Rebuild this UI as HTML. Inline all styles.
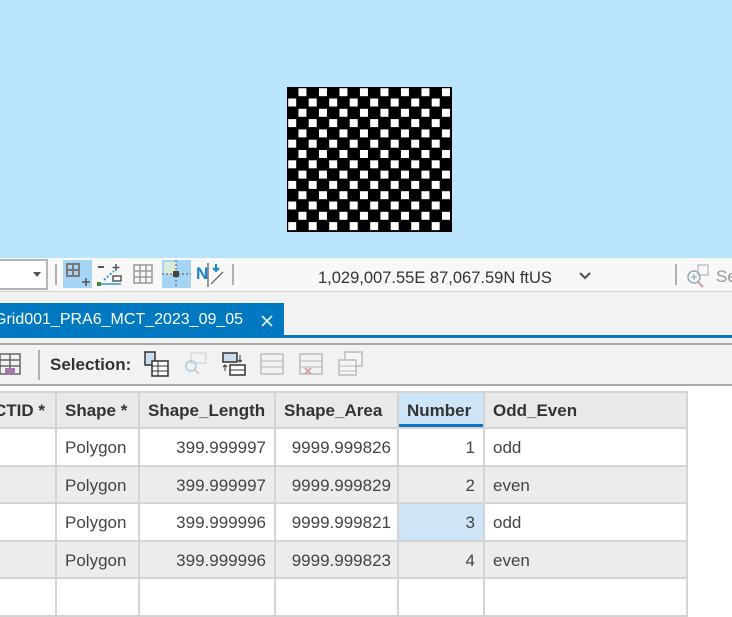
<!DOCTYPE html>
<html><head><style>
*{margin:0;padding:0;box-sizing:border-box}
body{width:732px;height:584px;overflow:hidden;background:#fff;font-family:"Liberation Sans",sans-serif;position:relative;color:#333}
.abs{position:absolute}
.map{left:0;top:0;width:732px;height:258px;background:#b9e4fc}
.status{left:0;top:258px;width:732px;height:34px;background:#f8f8f8;border-bottom:1px solid #d0d0d0}
.sep{width:2px;background:#b0b0b0}
.tabs{left:0;top:292px;width:732px;height:45px;background:#f2f2f2}
.tb{left:0;top:343px;width:732px;height:43px;background:#f2f2f2;border-top:2px solid #a8a8a8;border-bottom:2px solid #a8a8a8}
table{position:absolute;left:-3px;top:391px;border-collapse:collapse;font-size:17px;table-layout:fixed;width:689px}
td,th{border:2px solid #d4d4d4;height:37.5px;padding:3px 8px 0;white-space:nowrap;overflow:hidden}
th{background:#e9e9e9;font-weight:bold;text-align:left;height:36px;color:#333;padding-top:1px}
td{color:#444}
tr.g td{background:#ececec}
.r{text-align:right}
</style></head><body>
<div class="abs map"></div>
<svg class="abs" style="left:287px;top:87px" width="165" height="145" viewBox="0 0 165 145">
<defs>
<g id="ra" fill="#fff"><rect x="11.45" width="8" height="8"/><rect x="31.95" width="8" height="8"/><rect x="52.45" width="8" height="8"/><rect x="72.95" width="8" height="8"/><rect x="93.45" width="8" height="8"/><rect x="113.95" width="8" height="8"/><rect x="134.45" width="8" height="8"/><rect x="154.95" width="8" height="8"/></g>
<g id="rb" fill="#fff"><rect x="1.2" width="8" height="8"/><rect x="21.7" width="8" height="8"/><rect x="42.2" width="8" height="8"/><rect x="62.7" width="8" height="8"/><rect x="83.2" width="8" height="8"/><rect x="103.7" width="8" height="8"/><rect x="124.2" width="8" height="8"/><rect x="144.7" width="8" height="8"/></g>
</defs>
<rect width="165" height="145" fill="#000"/>
<use href="#ra" y="1.2"/><use href="#rb" y="11.5"/>
<use href="#ra" y="21.8"/><use href="#rb" y="32.1"/>
<use href="#ra" y="42.4"/><use href="#rb" y="52.7"/>
<use href="#ra" y="63"/><use href="#rb" y="73.3"/>
<use href="#ra" y="83.6"/><use href="#rb" y="93.9"/>
<use href="#ra" y="104.2"/><use href="#rb" y="114.5"/>
<use href="#ra" y="124.8"/><use href="#rb" y="135.1"/>
</svg>
<div class="abs status"></div>
<div class="abs" style="left:-2px;top:259px;width:50px;height:31px;background:#fff;border:2px solid #b5b5b5"></div>
<div class="abs" style="left:33px;top:272px;width:0;height:0;border-left:4px solid transparent;border-right:4px solid transparent;border-top:5px solid #555"></div>
<div class="abs sep" style="left:55px;top:264px;height:21px"></div>
<div class="abs" style="left:63px;top:260px;width:29px;height:28px;background:#a6d4f4"></div>
<svg class="abs" style="left:65px;top:262px" width="26" height="26"><path d="M2 2h12v12H2zM2 8h12M8 2v12" fill="none" stroke="#777" stroke-width="2"/><path d="M17 20h8M21 16v8" stroke="#555" stroke-width="1.5"/></svg>
<svg class="abs" style="left:97px;top:263px" width="26" height="24"><rect x="1" y="3" width="6" height="2" fill="#555"/><path d="M19 1v7M15.5 4.5h7" stroke="#555" stroke-width="1.5"/><path d="M7 17l10-9" stroke="#39c" stroke-width="2" stroke-dasharray="2 2"/><rect x="16" y="13" width="8" height="5" fill="none" stroke="#555" stroke-width="1.5"/><rect x="0" y="19" width="4" height="4" fill="#3a8a3a"/><path d="M4 21h20" stroke="#39c" stroke-width="1.5"/></svg>
<svg class="abs" style="left:133px;top:264px" width="20" height="20"><path d="M1 1h18v18H1zM1 7h18M1 13h18M7 1v18M13 1v18" fill="none" stroke="#999" stroke-width="1.5"/></svg>
<div class="abs" style="left:162px;top:260px;width:29px;height:28px;background:#a6d4f4"></div>
<svg class="abs" style="left:162px;top:260px" width="29" height="28"><rect x="2" y="2" width="12" height="12" fill="#d8ecd8"/><path d="M14 0v28M0 14h29" stroke="#555" stroke-width="1" stroke-dasharray="2 2"/><rect x="11" y="11" width="6" height="6" fill="#444"/></svg>
<div class="abs" style="left:196px;top:264px;font-weight:bold;color:#1a86d0;font-size:17px">N</div>
<svg class="abs" style="left:207px;top:262px" width="18" height="26"><path d="M1 1v24M4 22l12-12" stroke="#555" stroke-width="1.2"/><path d="M9 2v6M6 6l3 3 3-3" stroke="#1a86d0" stroke-width="2" fill="none"/></svg>
<div class="abs sep" style="left:232px;top:264px;height:21px"></div>
<div class="abs" style="left:318px;top:269px;font-size:16.5px;color:#333">1,029,007.55E 87,067.59N ftUS</div>
<svg class="abs" style="left:578px;top:271px" width="14" height="10"><path d="M2 2l5 5 5-5" fill="none" stroke="#555" stroke-width="2.2"/></svg>
<div class="abs sep" style="left:675px;top:264px;height:21px"></div>
<svg class="abs" style="left:685px;top:263px" width="28" height="26"><circle cx="9" cy="14" r="6" fill="none" stroke="#9ab" stroke-width="1.5"/><path d="M6 14h6M9 11v6" stroke="#9ab" stroke-width="1.3"/><path d="M13 19l5 5" stroke="#c9a" stroke-width="2"/><rect x="13" y="2" width="10" height="10" fill="none" stroke="#aaa"/></svg>
<div class="abs" style="left:716px;top:267px;font-size:17px;color:#999">Se</div>
<div class="abs tabs"></div>
<div class="abs" style="left:0;top:303px;width:284px;height:34px;background:#0079c1"></div>
<div class="abs" style="left:0;top:335px;width:732px;height:3px;background:#0079c1"></div>
<div class="abs" style="left:-6px;top:311px;font-size:16px;color:#fff">Grid001_PRA6_MCT_2023_09_05</div>
<svg class="abs" style="left:260px;top:314px" width="14" height="14"><path d="M2 2l10 10M12 2L2 12" stroke="#dfefff" stroke-width="1.8"/></svg>
<div class="abs tb"></div>
<svg class="abs" style="left:0;top:352px" width="22" height="26"><path d="M0 2h20v20H0zM0 8h20M0 14h20M10 2v20" fill="none" stroke="#666" stroke-width="1.5"/><rect x="5" y="16" width="10" height="6" fill="#a7a"/></svg>
<div class="abs sep" style="left:38px;top:350px;height:30px"></div>
<div class="abs" style="left:50px;top:355px;font-size:17px;font-weight:bold;color:#333">Selection:</div>
<svg class="abs" style="left:144px;top:351px" width="26" height="26"><rect x="1" y="1" width="10" height="13" fill="#cde" stroke="#333" stroke-width="1.5"/><rect x="8" y="10" width="16" height="15" fill="#fff" stroke="#333" stroke-width="1.5"/><path d="M8 15h16M8 20h16M14 10v15" stroke="#333"/></svg>
<svg class="abs" style="left:183px;top:351px" width="26" height="26"><rect x="8" y="2" width="15" height="10" fill="none" stroke="#ccc"/><circle cx="8" cy="15" r="5" fill="none" stroke="#acd" stroke-width="1.5"/><path d="M12 19l4 4" stroke="#dcb" stroke-width="2"/></svg>
<svg class="abs" style="left:221px;top:351px" width="26" height="26"><rect x="2" y="2" width="14" height="9" fill="#cde" stroke="#333" stroke-width="1.5"/><rect x="9" y="14" width="15" height="10" fill="#fff" stroke="#333" stroke-width="1.5"/><path d="M9 19h15M19 4v7M17 9l2 2 2-2M4 20v-6M2 16l2-2 2 2" stroke="#333" fill="none"/></svg>
<svg class="abs" style="left:260px;top:353px" width="24" height="22"><rect x="1" y="1" width="22" height="20" fill="none" stroke="#bbb" stroke-width="1.5"/><path d="M1 8h22M1 14h22" stroke="#bbb"/></svg>
<svg class="abs" style="left:299px;top:353px" width="24" height="24"><rect x="1" y="1" width="22" height="20" fill="none" stroke="#bbb" stroke-width="1.5"/><path d="M1 8h22M1 14h22" stroke="#bbb"/><path d="M6 15l6 6M12 15l-6 6" stroke="#d99" stroke-width="1.8"/></svg>
<svg class="abs" style="left:338px;top:351px" width="26" height="26"><rect x="7" y="1" width="17" height="14" fill="#f5f5f5" stroke="#bbb" stroke-width="1.5"/><rect x="1" y="9" width="17" height="15" fill="#f5f5f5" stroke="#bbb" stroke-width="1.5"/><path d="M1 15h17M1 20h17" stroke="#bbb"/></svg>
<table>
<colgroup><col style="width:58px"><col style="width:83px"><col style="width:136px"><col style="width:123px"><col style="width:86px"><col style="width:203px"></colgroup>
<tr><th style="padding:1px 0 0;text-indent:-5px">CTID *</th><th>Shape *</th><th>Shape_Length</th><th>Shape_Area</th><th style="background:#cde5f6;box-shadow:inset 0 -3px 0 #0e74c4">Number</th><th>Odd_Even</th></tr>
<tr><td></td><td>Polygon</td><td class="r">399.999997</td><td class="r" style="padding:3px 6px 0">9999.999826</td><td class="r">1</td><td>odd</td></tr>
<tr class="g"><td></td><td>Polygon</td><td class="r">399.999997</td><td class="r" style="padding:3px 6px 0">9999.999829</td><td class="r">2</td><td>even</td></tr>
<tr><td></td><td>Polygon</td><td class="r">399.999996</td><td class="r" style="padding:3px 6px 0">9999.999821</td><td class="r" style="background:#cde5f6">3</td><td>odd</td></tr>
<tr class="g"><td></td><td>Polygon</td><td class="r">399.999996</td><td class="r" style="padding:3px 6px 0">9999.999823</td><td class="r">4</td><td>even</td></tr>
<tr><td></td><td></td><td></td><td></td><td></td><td></td></tr>
</table>
<div class="abs" style="left:0;top:338px;width:732px;height:5px;background:#f2f2f2"></div>
<div class="abs" style="left:0;top:386px;width:732px;height:5px;background:#fff"></div>
</body></html>
